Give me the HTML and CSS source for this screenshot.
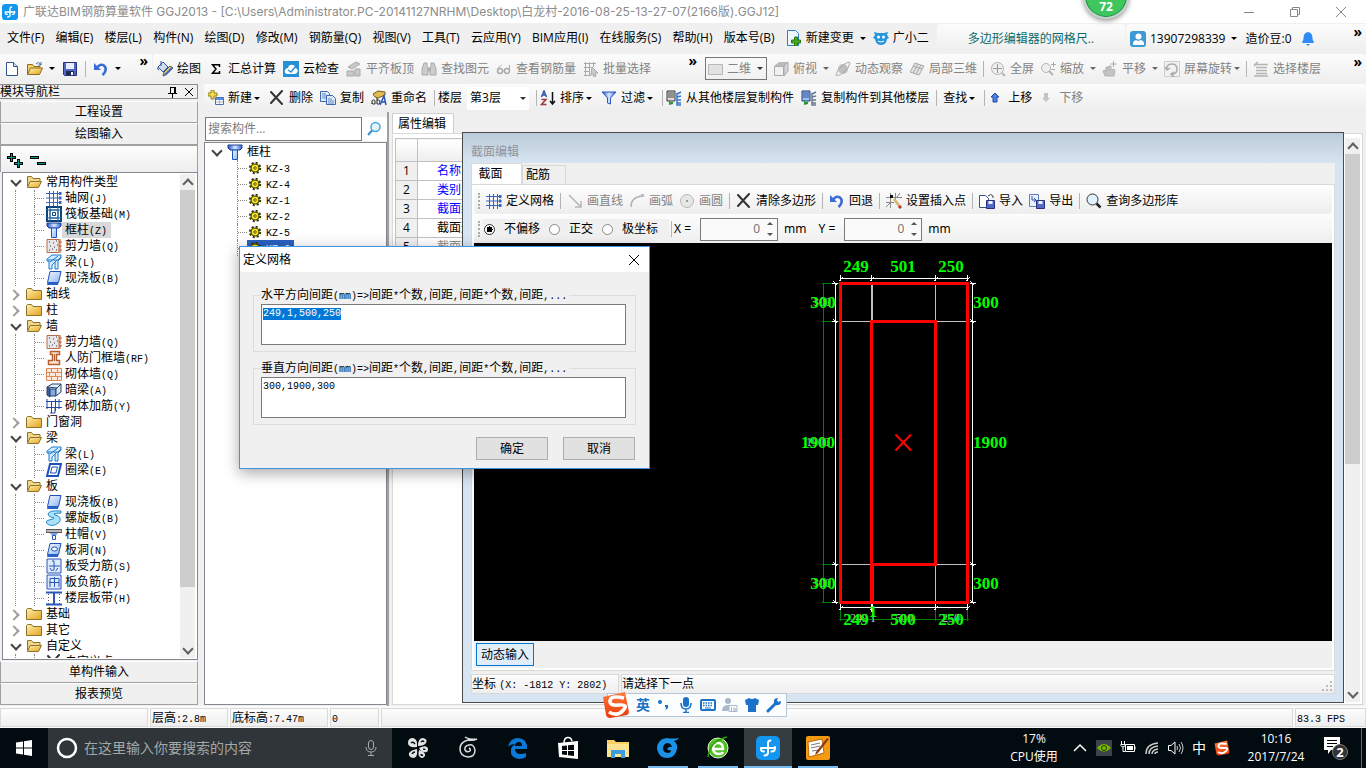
FILE: index.html
```html
<!DOCTYPE html>
<html lang="zh-CN">

<head>
    <meta charset="UTF-8">
    <title>广联达BIM钢筋算量软件 GGJ2013</title>
    <link rel="stylesheet" href="styles.css">
</head>

<body>
    <!-- 图标 -->
    <svg class="sprite" width="0" height="0">
        <defs>
            <linearGradient id="gy" x1="0" y1="0" x2="1" y2="1"><stop offset="0" stop-color="#fff3b0"/><stop offset="1" stop-color="#e2a21c"/></linearGradient>
            <linearGradient id="gb" x1="0" y1="0" x2="1" y2="1"><stop offset="0" stop-color="#f2f8ff"/><stop offset="1" stop-color="#8fb6ee"/></linearGradient>
            <linearGradient id="gc" x1="0" y1="0" x2="1" y2="0"><stop offset="0" stop-color="#1c50c8"/><stop offset=".5" stop-color="#dbe9ff"/><stop offset="1" stop-color="#2a62d8"/></linearGradient>
            <linearGradient id="gs" x1="0" y1="0" x2="0" y2="1"><stop offset="0" stop-color="#ff7a3c"/><stop offset="1" stop-color="#e83a08"/></linearGradient>
        </defs>
        <symbol id="app" viewBox="0 0 24 24"><rect width="24" height="24" rx="5" fill="#1296f0"/><path d="M12 16.500V7q0-2.500 2.500-2.500M5 12h14M5 12v1q0 2.500 3 2.500M19 12V11M12 16.500q0 3-3.500 3M19 12q0 3.500-3.500 3.500" fill="none" stroke="#fff" stroke-width="2" stroke-linecap="round"/></symbol>
        <symbol id="new" viewBox="0 0 16 16"><path d="M2.500 1.500h7l4 4v9h-11z" fill="#fff" stroke="#33518a"/><path d="M9.500 1.500v4h4" fill="#cfe0f6" stroke="#33518a"/></symbol>
        <symbol id="open" viewBox="0 0 16 16"><path d="M.5 13.500v-10h5l1.500 2h6v2" fill="#f3cf67" stroke="#8d6c21"/><path d="M.5 13.500l3-6.500h12l-3 6.500z" fill="url(#gy)" stroke="#8d6c21"/><path d="M9 3q3-3 5 1m0-3v3h-3" fill="none" stroke="#4d6f94"/></symbol>
        <symbol id="save" viewBox="0 0 16 16"><path d="M1.500 1.500h13v13h-12l-1-1z" fill="#5367c7" stroke="#28327b"/><path d="M4 2h8v6H4z" fill="#e9eefc"/><path d="M4 10h8v4H4z" fill="#20284f"/><path d="M9 11h2v3H9z" fill="#fff"/></symbol>
        <symbol id="undo" viewBox="0 0 16 16"><path d="M4 7q3-5 7-2.500 4 4-1.500 9.500" fill="none" stroke="#3a6bd8" stroke-width="2.500"/><path d="M1 2v7h7z" fill="#3a6bd8"/></symbol>
        <symbol id="paint" viewBox="0 0 16 16"><path d="M1 6l5-5 5 5-5 5z" fill="#cfdcf0" stroke="#38598f"/><path d="M4 0v5M1 6q-1 3 1 3" fill="none" stroke="#38598f"/><path d="M16 7l-6 6-4 2 1-4 6-6z" fill="#f0c860" stroke="#46526e"/><path d="M8 14l7-7" stroke="#3970c7" stroke-width="2"/></symbol>
        <symbol id="sigma" viewBox="0 0 16 16"><path d="M11.500 6V3.800H4.500L8 8l-3.500 4.200h7V10" fill="none" stroke="#000" stroke-width="1.500"/></symbol>
        <symbol id="cloud" viewBox="0 0 16 16"><rect width="16" height="16" fill="#2590d8"/><path d="M4 13q-3-1-2-4 1-2 3-2 1-4 5-3 2 0 2.500 3 3 1 2 4-1 2-3 2z" fill="#fff"/><path d="M5 9l3 2 5-6" fill="none" stroke="#2590d8" stroke-width="1.500"/></symbol>
        <symbol id="align" viewBox="0 0 16 16"><path d="M2 6l8-5 4 2-8 5zM1 10h7v5H1zM9 8h5v7H9z" fill="#c8c8c8" stroke="#aaa"/></symbol>
        <symbol id="binoc" viewBox="0 0 16 16"><path d="M3 2h3v3l1 2v7H1V8zM10 2h3l2 6v6H9V7l1-2zM7 7h2v3H7z" fill="#ccc" stroke="#aaa"/></symbol>
        <symbol id="glasses" viewBox="0 0 16 16"><circle cx="4" cy="10" r="2.500" fill="none" stroke="#aaa" stroke-width="1.500"/><circle cx="11" cy="10" r="2.500" fill="none" stroke="#aaa" stroke-width="1.500"/><path d="M1.500 10q0-4 4-6M13.500 10V4M6 10h3" fill="none" stroke="#aaa"/></symbol>
        <symbol id="batch" viewBox="0 0 16 16"><path d="M1 2.500h12M1 6.500h7M1 10.500h6M1 14.500h7M2.500 1v14M6.500 1v14M10.500 1v5" stroke="#aaa" fill="none"/><path d="M9 6l6 6-3 0 1 3-2 1-1-3-2 1z" fill="#ccc" stroke="#aaa"/></symbol>
        <symbol id="rect2d" viewBox="0 0 16 16"><path d="M.5 3.500h14v10H.5z" fill="#e2e2e2" stroke="#b8b8b8"/></symbol>
        <symbol id="cube" viewBox="0 0 16 16"><path d="M1 5l5-4h9l-4 4z" fill="#bbb"/><path d="M1.500 5.500h9v9h-9z" fill="#f0f0f0" stroke="#aaa"/><path d="M11 5l4-4v9l-4 5z" fill="#d5d5d5" stroke="#aaa"/></symbol>
        <symbol id="orbit" viewBox="0 0 16 16"><circle cx="8" cy="8" r="5" fill="#bfbfbf"/><path d="M1 14q1-6 7-10t7-2q-1 6-7 10t-7 2z" fill="none" stroke="#aaa"/></symbol>
        <symbol id="cube3" viewBox="0 0 16 16"><path d="M6 2l9 3-5 9-9-3zM4 5l9 3M9 3L4 12M12 4L7 13" fill="#e0e0e0" stroke="#aaa"/></symbol>
        <symbol id="full" viewBox="0 0 16 16"><circle cx="7.500" cy="7.500" r="6" fill="#eee" stroke="#b4b4b4"/><path d="M7.500 3v9M3 7.500h9" stroke="#999"/><path d="M12 12l3 3" stroke="#b4b4b4" stroke-width="2"/></symbol>
        <symbol id="zoomg" viewBox="0 0 16 16"><circle cx="6" cy="7" r="4.500" fill="#eee" stroke="#b4b4b4"/><path d="M9 10l4 4" stroke="#b4b4b4" stroke-width="2"/><path d="M11 3.500h5M13.500 1v5M11 8.500h4" stroke="#aaa"/></symbol>
        <symbol id="pan" viewBox="0 0 16 16"><path d="M3 15l-2-5 2-1 1 2V6h2v3l1-4h2v4l2-1 2 1-1 6z" fill="#c3c3c3" stroke="#b4b4b4"/><path d="M11.500 0v6M8.500 3h6" stroke="#aaa"/></symbol>
        <symbol id="rotate" viewBox="0 0 16 16"><path d="M.5.500h15v15H.500z" fill="#f2f2f2" stroke="#ccc"/><path d="M3 9q-1-6 5-6 5 0 5 5t-5 5M1 6l2 3 3-2M10 11l-3 2 3 3" fill="none" stroke="#aaa" stroke-width="1.500"/></symbol>
        <symbol id="floor" viewBox="0 0 16 16"><path d="M1 3.500h14M3 6.500h11M3 9.500h11M3 12.500h11M1 15h14M4.500 1L1 5" stroke="#b4b4b4" stroke-width="1.500"/></symbol>
        <symbol id="add" viewBox="0 0 16 16"><path d="M3 0h3v3h3v3H6v3H3V6H0V3h3z" fill="#f4dc4a" stroke="#93801e"/><path d="M7.500 7.500h8v7h-8z" fill="#fff" stroke="#4870b0"/><path d="M8 8h7v2H8z" fill="#5b8de0"/><path d="M8 12h7M11.500 10v4" stroke="#9bb5dd"/></symbol>
        <symbol id="x" viewBox="0 0 16 16"><path d="M2 2l11 12M13 1L2 13" stroke="#333" stroke-width="2" stroke-linecap="round"/></symbol>
        <symbol id="copy" viewBox="0 0 16 16"><path d="M.5 1.500h7l2 2v8h-9z" fill="#dfeafc" stroke="#3d66b0"/><path d="M6.500 5.500h6l3 3v6h-9z" fill="#dfeafc" stroke="#3d66b0"/><path d="M2 4h4M2 6h4M2 8h4M8 9h4M8 11h6M8 13h6" stroke="#5f88cc"/></symbol>
        <symbol id="rename" viewBox="0 0 16 16"><path d="M2 4l5-3 7 1v3l-7 3-3-1z" fill="#e3bd50" stroke="#6e5a28"/><path d="M1 14v-3q0-1 1.500-1T4 11v3H2.500Q1 14 1 13M6 8v6h1.500Q9 14 9 12t-1.500-2H6" fill="none" stroke="#222"/><path d="M9 15l4-9 2 9M10 12h4" stroke="#2a57b8" stroke-width="1.500" fill="none"/></symbol>
        <symbol id="sort" viewBox="0 0 16 16"><path d="M1.500 7L4 1l2.500 6M2.500 5h3" fill="none" stroke="#2f56a8" stroke-width="1.500"/><path d="M1.500 9.500H6l-4.500 5h5" fill="none" stroke="#a03a3a" stroke-width="1.500"/><path d="M12.500 2v11M10 11l2.500 3 2.500-3" fill="none" stroke="#111" stroke-width="1.500"/></symbol>
        <symbol id="filter" viewBox="0 0 16 16"><path d="M1 2h14L9.500 8v6l-3-1V8z" fill="url(#gc)" stroke="#2a57b8"/></symbol>
        <symbol id="copyfrom" viewBox="0 0 16 16"><path d="M1 1h8v10H1z" fill="#ddd" stroke="#333"/><path d="M2 3h6M2 5h6M2 7h6" stroke="#444"/><path d="M11 4l4-2M11 7l4-1M11 10h4M11 13h4M11 3v12h4" fill="none" stroke="#3978c8" stroke-width="1.500"/><path d="M4 9v3h3v2L3 15v-3z" fill="#249a3a"/></symbol>
        <symbol id="copyto" viewBox="0 0 16 16"><path d="M1 1h8v10H1z" fill="#9ec0ee" stroke="#1d3b74"/><path d="M2 3h6M2 5h6M2 7h6" stroke="#244f9a"/><path d="M11 4l4-2M11 7l4-1M11 10h4M11 13h4M11 3v12h4" fill="none" stroke="#68798e" stroke-width="1.500"/><path d="M4 9v3h3v2L3 15v-3z" fill="#249a3a"/></symbol>
        <symbol id="up" viewBox="0 0 16 16"><path d="M7 3l4 4H9v5H5V7H3z" fill="#4a83e6" stroke="#1d4ba2"/></symbol>
        <symbol id="down" viewBox="0 0 16 16"><path d="M7 12L3 8h2V3h4v5h2z" fill="#c4c4c4"/></symbol>
        <symbol id="folder" viewBox="0 0 16 16"><path d="M.5 13.500v-10l1-1h4l1.500 2h8.500v9z" fill="url(#gy)" stroke="#8f7130"/></symbol>
        <symbol id="fopen" viewBox="0 0 16 16"><path d="M1.500 12.500v-10h4l1.500 2h7v3" fill="#f2d98a" stroke="#8f7130"/><path d="M1.500 13.500l2.500-6h11.500l-3 6z" fill="url(#gy)" stroke="#8f7130"/></symbol>
        <symbol id="grid" viewBox="0 0 16 16"><path d="M0 3.500h15M0 8h15M0 12.500h15M3.500 1v15M7.500 1v15M11.500 1v15" stroke="#3566c0"/><path d="M13 2h2.500v3H13zM13 6.500h2.500v3H13zM13 11h2.500v3H13z" fill="#3566c0"/></symbol>
        <symbol id="raft" viewBox="0 0 16 16"><path d="M1 1h14v14H1z" fill="#fff" stroke="#08447c" stroke-width="2"/><path d="M4 4h8v8H4zM4 0v16M12 0v16M0 4h16M0 12h16" fill="none" stroke="#1b5fa0"/><path d="M6.500 6.500h3v3h-3z" fill="#fff" stroke="#08447c"/></symbol>
        <symbol id="column" viewBox="0 0 16 16"><path d="M1 1h14v3l-2 2H3L1 4z" fill="url(#gc)" stroke="#1c3f8c"/><path d="M5.500 6h5v9.500h-5z" fill="url(#gb)" stroke="#1c50c8"/></symbol>
        <symbol id="wall" viewBox="0 0 16 16"><path d="M1 1.500h12v13H1z" fill="#e8e8e8" stroke="#b86a4a"/><path d="M3 4h1M7 5h1M10 3h1M4 8h1M8 9h1M11 7h1M3 12h1M6 11h1M10 12h1" stroke="#333"/><path d="M14 1v14M13 4h3M13 8h3M13 12h3" stroke="#c05a28"/></symbol>
        <symbol id="beam" viewBox="0 0 16 16"><path d="M1 5l5-4h9v3l-3 3v8H9V8L6 11v4H3V7H1z" fill="#d5ebff" stroke="#1c78c8"/><path d="M2 6h10l3-3M4 8l8-6M6 11l5-5" fill="none" stroke="#1c78c8"/></symbol>
        <symbol id="slab" viewBox="0 0 16 16"><path d="M4 1.500h11l-2.500 11H1.500z" fill="url(#gb)" stroke="#1c50b8"/><path d="M1.500 12.500h11l-.5 2.500H1z" fill="#2a62c8"/></symbol>
        <symbol id="door" viewBox="0 0 16 16"><path d="M4.500 1.500h9v3h-3v6h3v4h-11v-4h4v-6h-2z" fill="#fbe3d3" stroke="#b5602e" stroke-width="1.500"/><path d="M8.500 4v7" stroke="#b5602e"/></symbol>
        <symbol id="brick" viewBox="0 0 16 16"><path d="M.5 2.500h15v12H.5zM0 6.500h16M0 10.500h16M5.500 2v4M11.500 2v4M3.500 6v4M9.500 6v4M5.500 10v4M11.500 10v4" fill="#fde9da" stroke="#d88a5c"/></symbol>
        <symbol id="hbeam" viewBox="0 0 16 16"><path d="M1 5l5-3 9 0-4 4z" fill="#e8f0fa" stroke="#22406f"/><path d="M1 5l3 2v8l-3-2z" fill="#3a5f9c" stroke="#22406f"/><path d="M4 7h6v7H4z" fill="#86a8dc" stroke="#22406f"/><path d="M10 7l5-5v8l-5 4z" fill="#dce6f5" stroke="#22406f"/></symbol>
        <symbol id="rebar" viewBox="0 0 16 16"><path d="M0 3.500h16M0 9.500h16M5.500 3v12M9.500 1v12M1 1v10M13 1v10M4 15h5v-5" fill="none" stroke="#2448a8"/></symbol>
        <symbol id="ring" viewBox="0 0 16 16"><path d="M4 2h11l-3 12H1z" fill="#fff" stroke="#1c50b8" stroke-width="2"/><path d="M6 5h5.500l-1.500 6H4.500z" fill="#fff" stroke="#1c50b8"/></symbol>
        <symbol id="spiral" viewBox="0 0 16 16"><path d="M15 1Q3 0 2 4q0 3 6 4 0 1-3 1.500-5 .5-5 3 5 6 13 0 3-4-1-6.500-4-1-4-2 2-1 7-1z" fill="#aee0fa" stroke="#1c88c8"/></symbol>
        <symbol id="cap" viewBox="0 0 16 16"><path d="M0 3.500h16v3H0z" fill="#bbb" stroke="#555"/><path d="M4 7h8l-2.500 3h-3z" fill="#78a0e6"/><path d="M6.500 9.500h3v4h-3z" fill="#fff" stroke="#2a57b8"/></symbol>
        <symbol id="hole" viewBox="0 0 16 16"><path d="M4 1.500h11l-2.500 11H1.500z" fill="url(#gb)" stroke="#1c50b8"/><path d="M1.500 12.500h11l-.5 2.500H1z" fill="#2a62c8"/><ellipse cx="8.500" cy="7" rx="3" ry="2" fill="#fff" stroke="#1c50b8"/></symbol>
        <symbol id="force" viewBox="0 0 16 16"><path d="M1 1h14v14H1z" fill="#dceaff" stroke="#2a57b8"/><path d="M3 8h11M8 3v9q-3 2-4-2M11.500 10q0 2-2 3M6 3h2" fill="none" stroke="#2a57b8"/></symbol>
        <symbol id="neg" viewBox="0 0 16 16"><path d="M1 1h14v14H1z" fill="#dceaff" stroke="#2a57b8"/><path d="M3 8.500h10M8.500 3v10M4 13V4.500h9V13" fill="none" stroke="#2a57b8"/></symbol>
        <symbol id="strip" viewBox="0 0 16 16"><path d="M0 2.500h16M0 14.500h16" stroke="#2a57b8" stroke-width="2"/><path d="M8 3v11" stroke="#2a57b8" stroke-width="2"/><path d="M2.500 4v10M13.500 4v10" stroke="#555" stroke-dasharray="1 2"/></symbol>
        <symbol id="gear" viewBox="-2 -2 20 20"><circle cx="8" cy="8" r="6.500" fill="none" stroke="#3d3800" stroke-width="2.500" stroke-dasharray="2.600 2.500"/><circle cx="8" cy="8" r="5" fill="#f6e60a" stroke="#3d3800" stroke-width="1.500"/><circle cx="8" cy="8" r="1.500" fill="#fff" stroke="#222"/></symbol>
        <symbol id="find" viewBox="0 0 16 16"><circle cx="9.500" cy="6" r="4.500" fill="#e4f4fd" stroke="#4ba6dc" stroke-width="1.500"/><path d="M6 9.500L2 14" stroke="#3a8fd0" stroke-width="2"/></symbol>
        <symbol id="mag" viewBox="0 0 16 16"><circle cx="6.500" cy="6.500" r="5.500" fill="#dff2fd" stroke="#333"/><path d="M10.500 10.500l4 4" stroke="#222" stroke-width="2.500"/></symbol>
        <symbol id="line" viewBox="0 0 16 16"><path d="M2 2l11 11M14 8v6H8" fill="none" stroke="#b8b8b8" stroke-width="1.500"/></symbol>
        <symbol id="arc" viewBox="0 0 16 16"><path d="M2 14Q2 4 13 3" fill="none" stroke="#b0b0b0" stroke-width="1.500"/><path d="M12 1h3v3h-3z" fill="#bbb"/></symbol>
        <symbol id="circ" viewBox="0 0 16 16"><circle cx="8" cy="8" r="6.500" fill="#e6e6e6" stroke="#b8b8b8"/><path d="M7 7h2v2H7z" fill="#999"/></symbol>
        <symbol id="pick" viewBox="0 0 16 16"><path d="M0 4.500h16M0 9.500h8M4.500 0v15M9.500 0v7M14 0l-3 4M0 14l4-4" stroke="#888"/><path d="M4 2h3v3H4z" fill="#111"/><path d="M8 6l6 8" stroke="#d8b468" stroke-width="2.500"/><path d="M13 13l2 2" stroke="#b03a3a" stroke-width="3"/></symbol>
        <symbol id="imp" viewBox="0 0 16 16"><path d="M.5 2.500h6l3 3v9h-9z" fill="#fff" stroke="#33518a"/><path d="M9 3q3-3 5 0v2" fill="none" stroke="#444"/><path d="M7.500 7.500h8v8h-8z" fill="#5367c7" stroke="#28327b"/><path d="M9.500 8h4v3h-4z" fill="#eef"/></symbol>
        <symbol id="exp" viewBox="0 0 16 16"><path d="M.5 1.500h9v12h-9z" fill="#eaf1fc" stroke="#6080b8"/><path d="M3 3v4h4M5 5l2 2-2 2" fill="none" stroke="#2a57b8"/><path d="M7.500 7.500h8v8h-8z" fill="#5367c7" stroke="#28327b"/><path d="M9.500 8h4v3h-4z" fill="#eef"/></symbol>
        <symbol id="change" viewBox="0 0 16 16"><path d="M1.500.500h8l3 3v12h-11z" fill="#eff6ff" stroke="#2a80c8"/><path d="M8.500 7h3v3h3v3h-3v3h-3v-3h-3v-3h3z" fill="#46a820" stroke="#2f7d12"/></symbol>
        <symbol id="mascot" viewBox="0 0 16 16"><path d="M1 2l4 1h6l4-1-1 3 2 3-2 1q-1 6-6 6T2 9L0 8l2-3z" fill="#2596dc"/><ellipse cx="5.500" cy="7" rx="1.500" ry="1.500" fill="#fff"/><ellipse cx="10.500" cy="7" rx="1.500" ry="1.500" fill="#fff"/><path d="M5 11q3 2 6 0" stroke="#fff" fill="none"/></symbol>
        <symbol id="user" viewBox="0 0 16 16"><rect width="16" height="16" rx="3" fill="#3c9ad6"/><circle cx="8.500" cy="5.500" r="3" fill="#fff"/><path d="M3 14v-2q0-2 3-3l2 1 3-1q3 1 3 3v2z" fill="#fff"/></symbol>
        <symbol id="bell" viewBox="0 0 16 16"><path d="M8 1q5 1 4.500 7l1.500 4H2l1.500-4Q3 2 8 1z" fill="#2c8cf4"/><path d="M6 13h4l-2 2z" fill="#2c8cf4"/></symbol>
        <symbol id="sogou" viewBox="0 0 28 28"><path d="M1 6L23 1l4 20q0 2-2 3L8 27q-3 0-4-3z" fill="url(#gs)"/><path d="M22 7Q9 4 8 9.500t9 4.500 4 5.500-14 1.500" fill="none" stroke="#fff" stroke-width="3.500"/></symbol>
        <symbol id="swirl" viewBox="0 0 24 24"><path d="M21 3q-4 2-9 1-8 2-8 9t8 8q7 0 7-7-1-6-6-5-5 1-4 5 2 3 5 1 1-2-1-3M9 1q4 3 10 2" fill="none" stroke="currentColor" stroke-width="1.500"/></symbol>
    </svg>

    <!-- 标题栏 -->
    <header class="titlebar">
        <svg class="ic"><use href="#app"/></svg>
        <span class="caption">广联达BIM钢筋算量软件 GGJ2013 - [C:\Users\Administrator.PC-20141127NRHM\Desktop\白龙村-2016-08-25-13-27-07(2166版).GGJ12]</span>
        <div class="winbtns">
            <button><svg class="ic" viewBox="0 0 16 16"><path d="M3 8.500h10" stroke="#888"/></svg></button>
            <button><svg class="ic" viewBox="0 0 16 16"><path d="M3.500 5.500h7v7h-7zM5.500 5V3.500h7v7H11" fill="none" stroke="#888"/></svg></button>
            <button><svg class="ic" viewBox="0 0 16 16"><path d="M3 3l10 10M13 3L3 13" stroke="#888"/></svg></button>
        </div>
    </header>
    <div class="badge">72</div>

    <!-- 菜单 -->
    <nav class="menubar">
        <div class="menus">
            <button>文件(F)</button><button>编辑(E)</button><button>楼层(L)</button><button>构件(N)</button><button>绘图(D)</button><button>修改(M)</button><button>钢筋量(Q)</button><button>视图(V)</button><button>工具(T)</button><button>云应用(Y)</button><button>BIM应用(I)</button><button>在线服务(S)</button><button>帮助(H)</button><button>版本号(B)</button>
            <span class="extra">
                <button class="tb"><svg class="ic"><use href="#change"/></svg>新建变更<i class="arrow wide"></i></button>
                <button class="tb"><svg class="ic"><use href="#mascot"/></svg>广小二</button>
            </span>
        </div>
        <div class="strip tip"><a href="#">多边形编辑器的网格尺..</a></div>
        <div class="strip account">
            <button class="tb"><svg class="ic"><use href="#user"/></svg>13907298339<i class="arrow wide"></i></button>
            <button>造价豆:0</button>
            <button class="tb"><svg class="ic"><use href="#bell"/></svg></button>
            <span class="more">»</span>
        </div>
    </nav>

    <!-- 工具栏 -->
    <div class="toolbar">
        <div class="strip files">
            <button class="tb"><svg class="ic"><use href="#new"/></svg></button>
            <button class="tb"><svg class="ic"><use href="#open"/></svg><i class="arrow wide"></i></button>
            <button class="tb"><svg class="ic"><use href="#save"/></svg></button>
            <i class="sep"></i>
            <button class="tb"><svg class="ic"><use href="#undo"/></svg><i class="arrow wide"></i></button>
            <span class="more">»</span>
        </div>
        <div class="strip draws">
            <button class="tb"><svg class="ic"><use href="#paint"/></svg>绘图</button>
            <button class="tb"><svg class="ic"><use href="#sigma"/></svg>汇总计算</button>
            <button class="tb"><svg class="ic"><use href="#cloud"/></svg>云检查</button>
            <button class="tb off"><svg class="ic"><use href="#align"/></svg>平齐板顶</button>
            <button class="tb off"><svg class="ic"><use href="#binoc"/></svg>查找图元</button>
            <button class="tb off"><svg class="ic"><use href="#glasses"/></svg>查看钢筋量</button>
            <button class="tb off"><svg class="ic"><use href="#batch"/></svg>批量选择</button>
            <span class="more">»</span>
        </div>
        <div class="strip views">
            <label class="combo boxed off"><svg class="ic"><use href="#rect2d"/></svg><select><option>二维</option></select></label>
            <button class="tb off"><svg class="ic"><use href="#cube"/></svg>俯视<i class="arrow wide"></i></button>
            <button class="tb off"><svg class="ic"><use href="#orbit"/></svg>动态观察</button>
            <button class="tb off"><svg class="ic"><use href="#cube3"/></svg>局部三维</button>
            <i class="sep"></i>
            <button class="tb off"><svg class="ic"><use href="#full"/></svg>全屏</button>
            <button class="tb off"><svg class="ic"><use href="#zoomg"/></svg>缩放<i class="arrow wide"></i></button>
            <button class="tb off"><svg class="ic"><use href="#pan"/></svg>平移<i class="arrow wide"></i></button>
            <button class="tb off"><svg class="ic"><use href="#rotate"/></svg>屏幕旋转<i class="arrow"></i></button>
            <i class="sep"></i>
            <button class="tb off"><svg class="ic"><use href="#floor"/></svg>选择楼层</button>
            <span class="more">»</span>
        </div>
    </div>

    <main class="main">
        <!-- 模块导航栏 -->
        <aside class="sidebar">
            <div class="side-title">模块导航栏
                <svg class="ic" viewBox="0 0 16 16"><path d="M5.500 3v6M10 3v6M5 3.500h5M3 9.500h9M7.500 10v4" stroke="#000" fill="none"/><path d="M9 3h2v6H9z"/></svg>
                <svg class="ic" viewBox="0 0 16 16"><path d="M4 4l8 8M12 4l-8 8" stroke="#000"/></svg>
            </div>
            <button class="side-btn">工程设置</button>
            <button class="side-btn">绘图输入</button>
            <div class="side-tools">
                <svg width="40" height="18" viewBox="0 0 40 18"><path d="M4.500 0v9M0 4.500h9M11.500 6v9M7 10.500h9M23 4.500h9M30 10.500h9" stroke="#000" stroke-width="3"/><path d="M4.500 1v7M1 4.500h7M11.500 7v7M8 10.500h7M24 4.500h7M31 10.500h7" stroke="#08968c"/></svg>
            </div>
            <div class="tree-box">
                <ul class="tree">
                    <li>
                        <div class="row"><b class="open"></b><svg class="ic"><use href="#fopen"/></svg><span>常用构件类型</span></div>
                        <ul class="kids">
                            <li><svg class="ic"><use href="#grid"/></svg><span>轴网<kbd>(J)</kbd></span></li>
                            <li><svg class="ic"><use href="#raft"/></svg><span>筏板基础<kbd>(M)</kbd></span></li>
                            <li class="cur"><svg class="ic"><use href="#column"/></svg><span>框柱<kbd>(Z)</kbd></span></li>
                            <li><svg class="ic"><use href="#wall"/></svg><span>剪力墙<kbd>(Q)</kbd></span></li>
                            <li><svg class="ic"><use href="#beam"/></svg><span>梁<kbd>(L)</kbd></span></li>
                            <li><svg class="ic"><use href="#slab"/></svg><span>现浇板<kbd>(B)</kbd></span></li>
                        </ul>
                    </li>
                    <li><div class="row"><b></b><svg class="ic"><use href="#folder"/></svg><span>轴线</span></div></li>
                    <li><div class="row"><b></b><svg class="ic"><use href="#folder"/></svg><span>柱</span></div></li>
                    <li>
                        <div class="row"><b class="open"></b><svg class="ic"><use href="#fopen"/></svg><span>墙</span></div>
                        <ul class="kids">
                            <li><svg class="ic"><use href="#wall"/></svg><span>剪力墙<kbd>(Q)</kbd></span></li>
                            <li><svg class="ic"><use href="#door"/></svg><span>人防门框墙<kbd>(RF)</kbd></span></li>
                            <li><svg class="ic"><use href="#brick"/></svg><span>砌体墙<kbd>(Q)</kbd></span></li>
                            <li><svg class="ic"><use href="#hbeam"/></svg><span>暗梁<kbd>(A)</kbd></span></li>
                            <li><svg class="ic"><use href="#rebar"/></svg><span>砌体加筋<kbd>(Y)</kbd></span></li>
                        </ul>
                    </li>
                    <li><div class="row"><b></b><svg class="ic"><use href="#folder"/></svg><span>门窗洞</span></div></li>
                    <li>
                        <div class="row"><b class="open"></b><svg class="ic"><use href="#fopen"/></svg><span>梁</span></div>
                        <ul class="kids">
                            <li><svg class="ic"><use href="#beam"/></svg><span>梁<kbd>(L)</kbd></span></li>
                            <li><svg class="ic"><use href="#ring"/></svg><span>圈梁<kbd>(E)</kbd></span></li>
                        </ul>
                    </li>
                    <li>
                        <div class="row"><b class="open"></b><svg class="ic"><use href="#fopen"/></svg><span>板</span></div>
                        <ul class="kids">
                            <li><svg class="ic"><use href="#slab"/></svg><span>现浇板<kbd>(B)</kbd></span></li>
                            <li><svg class="ic"><use href="#spiral"/></svg><span>螺旋板<kbd>(B)</kbd></span></li>
                            <li><svg class="ic"><use href="#cap"/></svg><span>柱帽<kbd>(V)</kbd></span></li>
                            <li><svg class="ic"><use href="#hole"/></svg><span>板洞<kbd>(N)</kbd></span></li>
                            <li><svg class="ic"><use href="#force"/></svg><span>板受力筋<kbd>(S)</kbd></span></li>
                            <li><svg class="ic"><use href="#neg"/></svg><span>板负筋<kbd>(F)</kbd></span></li>
                            <li><svg class="ic"><use href="#strip"/></svg><span>楼层板带<kbd>(H)</kbd></span></li>
                        </ul>
                    </li>
                    <li><div class="row"><b></b><svg class="ic"><use href="#folder"/></svg><span>基础</span></div></li>
                    <li><div class="row"><b></b><svg class="ic"><use href="#folder"/></svg><span>其它</span></div></li>
                    <li>
                        <div class="row"><b class="open"></b><svg class="ic"><use href="#fopen"/></svg><span>自定义</span></div>
                        <ul class="kids">
                            <li><svg class="ic"><use href="#x"/></svg><span>自定义点</span></li>
                        </ul>
                    </li>
                </ul>
                <div class="vscroll"><b class="up"></b><i class="thumb long"></i><b class="dn"></b></div>
            </div>
            <button class="side-btn">单构件输入</button>
            <button class="side-btn">报表预览</button>
        </aside>

        <div class="work">
            <div class="strip comp-tools">
                <button class="tb"><svg class="ic"><use href="#add"/></svg>新建<i class="arrow"></i></button>
                <button class="tb"><svg class="ic"><use href="#x"/></svg>删除</button>
                <button class="tb"><svg class="ic"><use href="#copy"/></svg>复制</button>
                <button class="tb"><svg class="ic"><use href="#rename"/></svg>重命名</button>
                <i class="sep"></i>
                <label for="floorSel">楼层</label>
                <span class="combo white"><select id="floorSel"><option>第3层</option></select></span>
                <i class="sep"></i>
                <button class="tb"><svg class="ic"><use href="#sort"/></svg>排序<i class="arrow"></i></button>
                <button class="tb"><svg class="ic"><use href="#filter"/></svg>过滤<i class="arrow"></i></button>
                <i class="sep"></i>
                <button class="tb"><svg class="ic"><use href="#copyfrom"/></svg>从其他楼层复制构件</button>
                <button class="tb"><svg class="ic"><use href="#copyto"/></svg>复制构件到其他楼层</button>
                <i class="sep"></i>
                <button class="tb find">查找<i class="arrow"></i></button>
                <i class="sep"></i>
                <button class="tb"><svg class="ic"><use href="#up"/></svg>上移</button>
                <button class="tb off"><svg class="ic"><use href="#down"/></svg>下移</button>
            </div>
            <div class="panels">
                <!-- 构件列表 -->
                <section class="comps">
                    <div class="search">
                        <input type="text" placeholder="搜索构件..." aria-label="搜索构件">
                        <button><svg class="ic"><use href="#find"/></svg></button>
                    </div>
                    <div class="comp-list">
                        <div class="row"><b class="open"></b><svg class="ic"><use href="#column"/></svg><span>框柱</span></div>
                        <ul class="kids">
                            <li><svg class="ic"><use href="#gear"/></svg><span><kbd>KZ-3</kbd></span></li>
                            <li><svg class="ic"><use href="#gear"/></svg><span><kbd>KZ-4</kbd></span></li>
                            <li><svg class="ic"><use href="#gear"/></svg><span><kbd>KZ-1</kbd></span></li>
                            <li><svg class="ic"><use href="#gear"/></svg><span><kbd>KZ-2</kbd></span></li>
                            <li><svg class="ic"><use href="#gear"/></svg><span><kbd>KZ-5</kbd></span></li>
                            <li class="sel"><svg class="ic"><use href="#gear"/></svg><span><kbd>KZ-6</kbd></span></li>
                        </ul>
                    </div>
                </section>
                <!-- 属性编辑 -->
                <section class="props">
                    <div class="tabs"><button class="tab">属性编辑</button></div>
                    <div class="props-body">
                        <table>
                            <tr><th></th><th></th></tr>
                            <tr><td>1</td><td class="blue">名称</td></tr>
                            <tr><td>2</td><td class="blue">类别</td></tr>
                            <tr><td>3</td><td class="blue">截面编辑</td></tr>
                            <tr><td>4</td><td>截面形状</td></tr>
                            <tr><td>5</td><td class="gray">截面宽</td></tr>
                        </table>
                        <div class="vscroll"><b class="up"></b><i class="thumb"></i><b class="dn"></b></div>
                    </div>
                </section>
            </div>
        </div>
    </main>

    <!-- 截面编辑窗口 -->
    <section class="editor">
        <h2>截面编辑</h2>
        <div class="ed-tabs"><button class="on">截面</button><button>配筋</button></div>
        <div class="ed-page">
            <div class="strip ed-tools">
                <i class="grip"></i>
                <button class="tb"><svg class="ic"><use href="#grid"/></svg>定义网格</button>
                <i class="sep"></i>
                <button class="tb off"><svg class="ic"><use href="#line"/></svg>画直线</button>
                <button class="tb off"><svg class="ic"><use href="#arc"/></svg>画弧</button>
                <button class="tb off"><svg class="ic"><use href="#circ"/></svg>画圆</button>
                <i class="sep"></i>
                <button class="tb"><svg class="ic"><use href="#x"/></svg>清除多边形</button>
                <i class="sep"></i>
                <button class="tb"><svg class="ic"><use href="#undo"/></svg>回退</button>
                <i class="sep"></i>
                <button class="tb"><svg class="ic"><use href="#pick"/></svg>设置插入点</button>
                <i class="sep"></i>
                <button class="tb"><svg class="ic"><use href="#imp"/></svg>导入</button>
                <button class="tb"><svg class="ic"><use href="#exp"/></svg>导出</button>
                <i class="sep"></i>
                <button class="tb"><svg class="ic"><use href="#mag"/></svg>查询多边形库</button>
            </div>
            <div class="strip ed-opts">
                <i class="grip"></i>
                <div class="radios">
                    <label><input type="radio" name="offset" checked>不偏移</label>
                    <label><input type="radio" name="offset">正交</label>
                    <label><input type="radio" name="offset">极坐标</label>
                </div>
                <i class="sep"></i>
                <label class="axis" for="offX">X =</label>
                <span class="spin"><input type="text" id="offX" value="0"><span><i></i><i></i></span></span>
                <span class="unit">mm</span>
                <label class="axis" for="offY">Y =</label>
                <span class="spin"><input type="text" id="offY" value="0"><span><i></i><i></i></span></span>
                <span class="unit">mm</span>
            </div>
            <div class="canvas">
                <svg width="858" height="399" viewBox="474 243 858 399">
                    <!-- 轴网 -->
                    <path d="M935.500 283v38M935.500 565v38M840 321.500h128M840 564.500h128" stroke="#c0c0c0"/>
                    <path d="M872 283v38" stroke="#c0c0c0" stroke-width="2"/>
                    <g fill="none" stroke="#008000">
                        <path d="M823.500 283v320M822 283.500h18M822 321.500h18M822 564.500h18M822 602.500h18M839 619.500h130M840.500 604v17M872.500 604v17M935.500 604v17M967.500 604v17"/>
                    </g>
                    <g fill="none" stroke="#fff">
                        <path d="M840 278.500h128M840.500 275v6M871.500 275v6M935.500 275v6M967.500 275v6M839 281l4-4M870 281l4-4M934 281l4-4M966 281l4-4"/>
                        <path d="M840 607.500h128M840.500 604v6M871.500 604v8M872.500 604v8M935.500 604v6M967.500 604v6M839 610l4-4M870 610l4-4M934 610l4-4M966 610l4-4"/>
                        <path d="M835.500 283v320M832 283.500h6M832 321.500h6M832 564.500h6M832 602.500h6M833 281l4 4M833 319l4 4M833 562l4 4M833 600l4 4"/>
                        <path d="M972.500 283v320M970 283.500h6M970 321.500h6M970 564.500h6M970 602.500h6M970 281l4 4M970 319l4 4M970 562l4 4M970 600l4 4"/>
                    </g>
                    <g class="dim2">
                        <text x="822" y="306">300</text><text x="818" y="446">1900</text><text x="822" y="587">300</text>
                        <text x="859" y="622">249</text><text x="873" y="622">1</text><text x="904" y="622">500</text><text x="951" y="622">250</text>
                    </g>
                    <!-- 截面轮廓 -->
                    <g fill="none" stroke="#f00" stroke-width="3">
                        <path d="M840.500 283.500h127v319h-127zM871.500 321.500h64v243h-64z"/>
                        <path d="M872 564v38" stroke-width="4"/>
                        <path d="M895.500 434.500l15.500 16M911 434.500l-15.500 16" stroke-width="2"/>
                    </g>
                    <g class="dim">
                        <text x="856" y="272">249</text><text x="903" y="272">501</text><text x="951" y="272">250</text>
                        <text x="823" y="308">300</text><text x="818" y="448">1900</text><text x="823" y="589">300</text>
                        <text x="986" y="308">300</text><text x="990" y="448">1900</text><text x="986" y="589">300</text>
                        <text x="856" y="625">249</text><text x="873" y="617">1</text><text x="903" y="625">500</text><text x="951" y="625">250</text>
                    </g>
                </svg>
            </div>
            <div class="ed-foot"><button>动态输入</button></div>
        </div>
        <div class="ed-status">
            <span>坐标 <kbd>(X: -1812 Y: 2802)</kbd></span><span class="grow">请选择下一点<svg width="12" height="12" viewBox="0 0 12 12"><path d="M8 0h2v2H8zM4 4h2v2H4zM8 4h2v2H8zM0 8h2v2H0zM4 8h2v2H4zM8 8h2v2H8z" fill="#bbb"/></svg></span>
        </div>
    </section>

    <!-- 定义网格对话框 -->
    <form class="dialog" id="gridForm">
        <div class="dlg-title">定义网格<button type="button"><svg class="ic" viewBox="0 0 16 16"><path d="M3 3l10 10M13 3L3 13" stroke="#000"/></svg></button></div>
        <fieldset>
            <legend><label for="hGap">水平方向间距<kbd>(mm)=&gt;</kbd>间距<kbd>*</kbd>个数<kbd>,</kbd>间距<kbd>,</kbd>间距<kbd>*</kbd>个数<kbd>,</kbd>间距<kbd>,...</kbd></label></legend>
            <textarea id="hGap" spellcheck="false">249,1,500,250</textarea>
        </fieldset>
        <fieldset>
            <legend><label for="vGap">垂直方向间距<kbd>(mm)=&gt;</kbd>间距<kbd>*</kbd>个数<kbd>,</kbd>间距<kbd>,</kbd>间距<kbd>*</kbd>个数<kbd>,</kbd>间距<kbd>,...</kbd></label></legend>
            <textarea id="vGap" spellcheck="false">300,1900,300</textarea>
        </fieldset>
        <div class="dlg-btns"><button type="submit">确定</button><button type="button">取消</button></div>
    </form>

    <footer class="statusbar">
        <span class="c1"></span><span class="c2">层高<kbd>:2.8m</kbd></span><span class="c3">底标高<kbd>:7.47m</kbd></span><span class="c4"><kbd>0</kbd></span><span class="grow"></span><span class="c5"><kbd>83.3 FPS</kbd></span>
    </footer>

    <!-- 输入法 -->
    <div class="ime">
        <svg class="logo"><use href="#sogou"/></svg>
        <button>英</button>
        <button><svg class="ic" viewBox="0 0 16 16"><circle cx="4" cy="5" r="2" fill="#1c72c8"/><path d="M9 8h3q1 4-3 5 2-2 0-3z" fill="#1c72c8"/></svg></button>
        <button><svg class="ic" viewBox="0 0 16 16"><rect x="5" y="0" width="6" height="10" rx="3" fill="#1c72c8"/><path d="M3 6q0 6 5 6t5-6M8 12v3M5 15.500h6" fill="none" stroke="#1c72c8" stroke-width="1.500"/></svg></button>
        <button><svg class="ic" viewBox="0 0 16 16"><rect x="1" y="3" width="14" height="10" rx="1" fill="none" stroke="#1c72c8" stroke-width="2"/><path d="M3 6h10M3 8.500h10" stroke="#1c72c8" stroke-width="1.500" stroke-dasharray="1.500 1"/><path d="M5 11h6" stroke="#1c72c8"/></svg></button>
        <button><svg class="ic" viewBox="0 0 16 16"><circle cx="6" cy="4" r="3" fill="#aab8cc"/><path d="M0 14q0-6 6-6t6 6z" fill="#aab8cc"/><path d="M7 8.500h8v6H7z" fill="#fff" stroke="#aab8cc"/><path d="M9.500 10v4M12 10v4h2v-2h-2" fill="none" stroke="#aab8cc"/></svg></button>
        <button><svg class="ic" viewBox="0 0 16 16"><path d="M5 1q3 2 6 0l4 2-1 5h-2v7H4V8H2L1 3z" fill="#1c72c8"/></svg></button>
        <button><svg class="ic" viewBox="0 0 16 16"><path d="M2 14l7-7" stroke="#1c72c8" stroke-width="3" stroke-linecap="round"/><path d="M12 1q-5 0-4 5 1 3 4 2 3 0 3-4l-3 1-1-2z" fill="#1c72c8"/></svg></button>
    </div>

    <!-- 任务栏 -->
    <div class="taskbar">
        <button class="start"><svg class="ic" viewBox="0 0 16 16"><path d="M0 2.500L7 1.500v6H0zM8 1.300L16 0v7.500H8zM0 8.500h7v6l-7-1zM8 8.500h8V16l-8-1.300z" fill="#fff"/></svg></button>
        <div class="cortana">
            <svg width="22" height="22" viewBox="0 0 22 22"><circle cx="11" cy="11" r="9" fill="none" stroke="#fff" stroke-width="2.500"/></svg>
            <input type="text" placeholder="在这里输入你要搜索的内容" aria-label="搜索">
            <svg class="ic" viewBox="0 0 16 16"><rect x="5.500" y="0.500" width="5" height="9" rx="2.500" fill="none" stroke="#aaa"/><path d="M3 7q0 5 5 5t5-5M8 12v3M5 15.500h6" fill="none" stroke="#aaa"/></svg>
        </div>
        <div class="apps">
            <button><svg viewBox="0 0 24 24"><g fill="#e4e4e4"><path d="M11 11Q2 12 2 7q0-5 5-5 5 1 4 9z"/><path d="M12 10q0-8 5-8 5 1 3 5-2 3-8 3z"/><path d="M13 12q8-4 9 1 0 4-4 3-3 0-5-4z"/><path d="M13 14q7 2 6 6-3 4-6 0-1-2 0-6z"/><path d="M11 13q1 9-4 9-5-1-4-5 2-3 8-4z"/></g><path d="M5 7q2-2 4 1M15 6q2-2 3 0M6 18q1-2 3-2M15 18q0 2 2 1M17 13q2 0 2 1" fill="none" stroke="#06121a" stroke-width="1.500"/></svg></button>
            <button class="pale"><svg viewBox="0 0 24 24"><use href="#swirl"/></svg></button>
            <button><svg viewBox="0 0 24 24"><path d="M2 11Q4 2 12 2q10 1 9 11H9q0 5 6 5 3 0 5-1v4q-3 2-7 2-9-1-8-9 0-4 5-6-6 0-8 3zM9 10h7q0-4-3-4-4 0-4 4z" fill="#0b78d8"/></svg></button>
            <button><svg viewBox="0 0 24 24"><path d="M2 7l20-2v18L3 21z" fill="#fff"/><path d="M8 7q0-5 3.500-5.500T16 5" fill="none" stroke="#fff" stroke-width="1.500"/><path d="M6 10l5-.5V14H6zM12 9.300l6-.5V14h-6zM6 15h5v4l-5-.5zM12 15h6v5l-6-.8z" fill="#02090d"/></svg></button>
            <button><svg viewBox="0 0 24 24"><path d="M1 4h7l2 2h13v15H1z" fill="#f7cf62"/><path d="M1 8h22v13H1z" fill="#fde391"/><path d="M5 22v-8h14v8h-4v-4H9v4z" fill="#3a9ee0"/></svg></button>
            <button class="run"><svg viewBox="0 0 24 24"><path d="M23 2q-2 3-5 3 4 3 3 8-2 9-10 9T1 13Q1 3 11 2q6 1 12 0zM16 11q-1-4-5-4-4 1-4 6 1 4 5 4 3 0 3-3-2 1-4-1 2-3 5-2z" fill="#1b92e8" fill-rule="evenodd"/></svg></button>
            <button class="run"><svg viewBox="0 0 24 24"><circle cx="12" cy="12" r="10" fill="#4ec020" stroke="#e8f8d8"/><path d="M6 13h11q0-6-5-6t-5 6q1 5 6 5 3 0 4-2" fill="none" stroke="#fff" stroke-width="2.500"/><path d="M2 21Q4 5 21 1" fill="none" stroke="#2e9a10" stroke-width="1.500"/></svg></button>
            <button class="run active"><svg viewBox="0 0 24 24"><use href="#app"/></svg></button>
            <button class="run"><svg viewBox="0 0 24 24"><rect width="24" height="24" rx="2" fill="#f39a10"/><path d="M2 6l14-3 2 14-15 4z" fill="#fff" stroke="#b86a08"/><path d="M5 9l9-2M5 12l9-2M6 15l6-1" stroke="#777"/><path d="M21 2L10 16l-1 3 3-2L23 3z" fill="#8c3a14"/></svg></button>
        </div>
        <div class="cpu">17%<br>CPU使用</div>
        <div class="tray">
            <svg class="ic" viewBox="0 0 16 16"><path d="M2 11l6-6 6 6" fill="none" stroke="#fff" stroke-width="1.500"/></svg>
            <svg class="ic" viewBox="0 0 16 16"><rect width="16" height="16" fill="#3c434a"/><path d="M1 8q7-8 14 0-7 7-14 0z" fill="#76b900"/><circle cx="8" cy="8" r="2.500" fill="none" stroke="#26380a"/></svg>
            <svg class="ic" viewBox="0 0 16 16"><path d="M5.500 4.500h9v7h-9zM15 6.500v3M1.500 1v3M4.500 1v3M.500 4.500h5v1q-2.500 3-5 0M3 7v4.500h2" fill="none" stroke="#fff"/><path d="M7 6h6v4H7z" fill="#fff"/></svg>
            <svg class="ic" viewBox="0 0 16 16"><path d="M2 14Q2 4 14 3M5 14q0-7 9-8M8 14q0-4 6-5M11 14q0-2 3-2" fill="none" stroke="#ccc" stroke-width="1.500"/></svg>
            <svg class="ic" viewBox="0 0 16 16"><path d="M.5 5.500H3L7 2v12L3 10.500H.500z" fill="none" stroke="#fff"/><path d="M9 6q1 2 0 4M11 4q3 4 0 8M13 2q4 6 0 12" fill="none" stroke="#ccc"/></svg>
            <span class="lang">中</span>
            <svg class="ic"><use href="#sogou"/></svg>
        </div>
        <div class="clock">10:16<br>2017/7/24</div>
        <button class="notice"><svg width="24" height="24" viewBox="0 0 24 24"><path d="M0 1h16v13H7l-3 4v-4H0z" fill="#fff"/><path d="M3 4.500h10M3 7.500h10M3 10.500h6" stroke="#000"/><circle cx="16" cy="16" r="7.500" fill="#333" stroke="#777"/><text x="16" y="21">2</text></svg></button>
    </div>

    <script>
        // 打开对话框时选中第一个输入框的内容
        var gap = document.getElementById('hGap');
        gap.focus();
        gap.select();

        document.getElementById('gridForm').addEventListener('submit', function (e) {
            e.preventDefault();
        });
    </script>
</body>

</html>
```
FILE: styles.css
```css
* {
    box-sizing: border-box;
}

body {
    margin: 0;
    height: 100vh;
    display: flex;
    flex-direction: column;
    overflow: hidden;
    position: relative;
    background: #f0f0f0;
    color: #000;
    font: 12px/16px "Open Sans", "Noto Sans CJK SC", sans-serif;
}

button,
input,
select,
textarea {
    font: inherit;
    color: inherit;
    margin: 0;
    border-radius: 0;
}

button {
    padding: 0;
    border: none;
    background: none;
    white-space: nowrap;
}

ul {
    list-style: none;
    margin: 0;
    padding: 0;
}

kbd {
    font: 10px/12px "Liberation Mono", monospace;
}

.sprite {
    position: absolute;
}

.ic {
    width: 16px;
    height: 16px;
    flex: none;
    display: block;
}

/* 标题栏 */
.titlebar {
    display: flex;
    align-items: center;
    height: 23px;
    flex: none;
    padding: 0 17px 0 2px;
    background: #fff;
    color: #8c8c8c;
}

.caption {
    flex: 1;
    margin-left: 5px;
    font-family: Inter, "Noto Sans CJK SC", sans-serif;
    white-space: nowrap;
}

.winbtns {
    display: flex;
    gap: 30px;
}

.badge {
    position: absolute;
    top: -27px;
    left: 1083px;
    width: 46px;
    height: 46px;
    padding-top: 24px;
    border: 2px solid #c9d3cd;
    border-radius: 50%;
    background: #3fc65c;
    box-shadow: inset 0 0 0 1px #1e8a4c, 0 2px 5px #999;
    color: #fff;
    font-weight: bold;
    text-align: center;
}

/* 菜单和工具栏 */
.menubar,
.toolbar {
    display: flex;
    flex: none;
    height: 30px;
}

.menus {
    display: flex;
    align-items: center;
    justify-content: space-between;
    width: 937px;
    padding: 0 8px 0 7px;
}

.extra {
    display: flex;
    gap: 7px;
}

.strip {
    display: flex;
    align-items: center;
    gap: 7px;
    margin-top: 1px;
    padding: 0 4px;
    border-radius: 3px;
    background: linear-gradient(#fcfcfc, #eee);
}

.tip {
    width: 188px;
    justify-content: center;
    margin-right: 1px;
}

.tip a {
    color: #0a6b6b;
    text-decoration: none;
}

.account {
    flex: 1;
    gap: 8px;
}

.tb {
    display: flex;
    align-items: center;
    gap: 4px;
}

.off {
    color: #838383;
}

.arrow {
    margin-left: -2px;
    border: 3px solid transparent;
    border-top-color: #000;
    border-bottom: 0;
}

.wide {
    margin-left: 2px;
}

.off .arrow {
    border-top-color: #666;
}

.sep {
    width: 1px;
    height: 16px;
    flex: none;
    background: #b4b4b4;
}

.more {
    align-self: flex-start;
    margin-left: auto;
    font-size: 14px;
    font-weight: bold;
}

.files {
    width: 152px;
}

.files .more,
.draws .more {
    line-height: 14px;
}

.draws {
    width: 548px;
    margin-left: 1px;
}

.views {
    flex: 1;
    gap: 6px;
}

.combo {
    display: flex;
    align-items: center;
    height: 23px;
    flex: none;
}

.combo select {
    appearance: none;
    border: none;
    background: none;
    outline: none;
    padding: 0 0 0 3px;
    width: 100%;
}

.combo::after {
    content: "";
    flex: none;
    margin-right: 3px;
    border: 3px solid transparent;
    border-top-color: #333;
    border-bottom: 0;
}

.boxed {
    width: 62px;
    padding-left: 2px;
    border: 1px solid #777;
}

.white {
    width: 62px;
    background: #fff;
}

/* 主体 */
.main {
    display: flex;
    flex: 1;
    min-height: 0;
    gap: 6px;
}

.sidebar {
    display: flex;
    flex-direction: column;
    width: 198px;
    padding: 1px 0;
}

.side-title {
    display: flex;
    align-items: center;
    height: 15px;
    margin-bottom: 2px;
    border: 1px solid #8a8a8a;
    border-left: none;
}

.side-title .ic:first-of-type {
    margin-left: auto;
}

.side-btn {
    height: 22px;
    flex: none;
    border: 1px solid #a0a0a0;
    border-top-color: #fff;
    background: #f0f0f0;
}

.side-tools {
    height: 27px;
    flex: none;
    padding: 7px 0 0 6px;
    border: 1px solid #a0a0a0;
    border-bottom: none;
    background: linear-gradient(#fdfdfd, #eee);
}

.tree-box {
    display: flex;
    flex: 1;
    min-height: 0;
    margin: 0 0 1px 2px;
    padding: 1px 2px 1px 1px;
    border: 1px solid #828790;
    background: #fff;
}

.tree {
    flex: 1;
    overflow: hidden;
}

.row {
    display: flex;
    align-items: center;
    height: 16px;
    padding-left: 6px;
}

.row b {
    width: 10px;
    height: 6px;
    margin-right: 6px;
}

.row b::before {
    content: "";
    display: block;
    width: 6px;
    height: 6px;
    border: solid #a0a0a0;
    border-width: 2px 2px 0 0;
    transform: rotate(45deg);
}

.row b.open::before {
    margin: -2px 0 0 2px;
    border-color: #444;
    border-width: 0 2px 2px 0;
}

.row span {
    margin-left: 4px;
}

.kids {
    margin-left: 11px;
    padding-left: 18px;
    border-left: 1px dotted #888;
}

.kids li {
    display: flex;
    align-items: center;
    height: 16px;
    border-left: 1px dotted #888;
}

.kids li::before {
    content: "";
    width: 9px;
    margin-right: 2px;
    border-top: 1px dotted #888;
}

.kids span {
    padding: 0 4px 0 3px;
    white-space: nowrap;
}

.kids .cur span {
    background: #d9d9d9;
}

.vscroll {
    display: flex;
    flex-direction: column;
    width: 15px;
    flex: none;
    background: #f0f0f0;
}

.vscroll b {
    display: flex;
    align-items: center;
    justify-content: center;
    height: 16px;
}

.vscroll b::before {
    content: "";
    width: 6px;
    height: 6px;
    margin-top: 3px;
    border: solid #606060;
    border-width: 2px 0 0 2px;
    transform: rotate(45deg);
}

.vscroll .dn::before {
    margin: 0 0 3px;
    transform: rotate(225deg);
}

.vscroll .dn {
    margin-top: auto;
}

.thumb {
    height: 310px;
    background: #cdcdcd;
}

.long {
    height: 397px;
}

.work {
    display: flex;
    flex-direction: column;
    flex: 1;
    min-width: 0;
}

.comp-tools {
    height: 28px;
    flex: none;
}

.comp-tools .arrow {
    margin-right: 2px;
}

.comp-tools .sep {
    margin-right: -4px;
}

.comp-tools .combo {
    margin-left: -2px;
}

.comp-tools .find {
    margin-left: 3px;
}

.panels {
    display: flex;
    flex: 1;
    min-height: 0;
    gap: 3px;
}

.comps {
    display: flex;
    flex-direction: column;
    width: 185px;
    padding: 5px 0 1px;
    border-right: 2px solid #a0a0a0;
}

.search {
    display: flex;
    gap: 4px;
    height: 24px;
    flex: none;
    margin-left: 1px;
    background: #fff;
}

.search input {
    width: 157px;
    padding: 0 2px;
    border: 1px solid #7a7a7a;
    outline: none;
}

.search input::placeholder {
    color: #7d7d7d;
}

.comp-list {
    flex: 1;
    margin-top: 1px;
    padding-top: 1px;
    border: 1px solid #828790;
    background: #fff;
}

.comp-list .kids {
    margin-left: 13px;
    border-left-color: transparent;
}

.comp-list .kids li::before {
    margin-right: 0;
}

.comp-list .sel span {
    background: #2a62c0;
    color: #fff;
}

.comp-list .sel .ic {
    background: #2a62c0;
}

.props {
    display: flex;
    flex-direction: column;
    flex: 1;
    min-width: 0;
    padding: 1px 3px 1px 0;
}

.tabs {
    display: flex;
}

.tabs .tab {
    height: 20px;
    padding: 0 7px 0 5px;
    border: 1px solid #d0d0d0;
    border-bottom: none;
    background: #fff;
}

.props-body {
    display: flex;
    justify-content: space-between;
    align-items: flex-start;
    flex: 1;
    padding: 4px 2px 2px;
    border: 1px solid #d9d9d9;
    background: #fff;
}

.props-body .vscroll {
    align-self: stretch;
}

.props table {
    width: 260px;
    border-collapse: collapse;
    border: 1px solid #a0a0a0;
}

.props th {
    height: 23px;
    border: 1px solid #c0c0c0;
    background: linear-gradient(#fff, #eee);
}

.props td {
    height: 19px;
    padding: 0 0 0 19px;
    border: 1px solid #c0c0c0;
    line-height: 16px;
}

.props td:first-child {
    width: 22px;
    padding: 0;
    background: #f0f0f0;
    text-align: center;
}

.blue {
    color: #00f;
}

.gray {
    color: #888;
}

/* 截面编辑窗口 */
.editor {
    position: absolute;
    left: 462px;
    right: 22px;
    top: 132px;
    bottom: 65px;
    display: flex;
    flex-direction: column;
    padding: 0 8px 8px;
    border: 1px solid #4a4a4a;
    background: linear-gradient(#bccbd9, #d7e4f2 30px);
}

.editor h2 {
    height: 30px;
    flex: none;
    margin: 0;
    padding-top: 11px;
    color: #8d949c;
    font-size: 12px;
    font-weight: normal;
}

.ed-tabs {
    display: flex;
    align-items: flex-end;
    height: 21px;
    flex: none;
    background: #f0f0f0;
}

.ed-tabs button {
    width: 44px;
    height: 19px;
    padding-right: 12px;
    border: 1px solid #d9d9d9;
    border-bottom: none;
}

.ed-tabs .on {
    width: 51px;
    height: 21px;
    background: #fff;
}

.ed-page {
    display: flex;
    flex-direction: column;
    flex: 1;
    min-height: 0;
    padding: 2px;
    border: 1px solid #d9d9d9;
    background: #fff;
}

.ed-tools {
    height: 27px;
    flex: none;
    gap: 6px;
    margin: 0;
}

.grip {
    width: 2px;
    height: 16px;
    border-left: 2px dotted #aaa;
}

.ed-opts {
    height: 28px;
    flex: none;
    gap: 2px;
    margin: 1px 0 0;
    font-family: "Noto Sans", "Noto Sans CJK SC", sans-serif;
}

.radios {
    display: flex;
    gap: 9px;
    padding: 2px 11px 2px 2px;
    background: #f0f0f0;
}

.radios label {
    display: flex;
    align-items: center;
    gap: 9px;
}

.radios input {
    appearance: none;
    width: 11px;
    height: 11px;
    border: 1px solid #888;
    border-radius: 50%;
    background: #fff;
}

.radios input:checked {
    border-color: #333;
    background: radial-gradient(#000 3px, #fff 3px);
}

.axis {
    padding-right: 3px;
}

.spin {
    display: flex;
    align-items: center;
    width: 78px;
    height: 23px;
    margin: 0 4px;
    border: 1px solid #7a7a7a;
    background: #fafafa;
    color: #777;
}

.spin input {
    width: 60px;
    padding: 0 1px;
    border: none;
    outline: none;
    background: none;
    text-align: right;
}

.spin span {
    display: flex;
    flex-direction: column;
    gap: 8px;
    padding-left: 6px;
}

.spin i {
    border: 3px solid transparent;
    border-bottom-color: #555;
    border-top: 0;
}

.spin i + i {
    transform: rotate(180deg);
}

.unit {
    margin-right: 10px;
}

.canvas {
    display: flex;
    justify-content: center;
    flex: 1;
    min-height: 0;
    background: #000;
}

.canvas svg {
    flex: none;
}

.canvas text {
    text-anchor: middle;
    font-family: "Liberation Serif", serif;
}

.dim text {
    fill: #0f0;
    font-size: 17px;
    font-weight: bold;
}

.dim2 text {
    fill: #b8b8b8;
    font-size: 12px;
}

.ed-foot {
    height: 27px;
    flex: none;
    padding: 2px;
    background: #f0f0f0;
}

.ed-foot button {
    width: 58px;
    height: 23px;
    border: 1px solid #0078d7;
    background: #e1eefa;
}

.ed-status {
    display: flex;
    flex: none;
    gap: 2px;
    padding: 3px 0 0;
    background: #f0f0f0;
}

.ed-status span {
    width: 148px;
    height: 20px;
    line-height: 18px;
    border: 1px solid #d9d9d9;
    background: linear-gradient(#fdfdfd, #eee);
    white-space: nowrap;
}

.ed-status .grow {
    display: flex;
    align-items: flex-end;
    justify-content: space-between;
    flex: 1;
}

/* 对话框 */
.dialog {
    position: absolute;
    left: 239px;
    top: 246px;
    width: 411px;
    height: 223px;
    border: 1px solid #3f92e4;
    background: #f0f0f0;
    box-shadow: 0 4px 14px rgba(0, 0, 0, 0.35);
}

.dlg-title {
    display: flex;
    align-items: center;
    justify-content: space-between;
    height: 25px;
    padding: 0 7px 0 3px;
    background: #fff;
}

.dialog fieldset {
    margin: 15px 13px 8px;
    padding: 0 9px 6px 7px;
    border: 1px solid #dcdcdc;
    height: 65px;
}

.dialog fieldset + fieldset {
    margin-top: 8px;
}

.dialog legend {
    padding: 0 2px 0 0;
    white-space: nowrap;
}

.dialog textarea {
    display: block;
    width: 100%;
    height: 41px;
    margin-top: 1px;
    padding: 3px 1px;
    border: 1px solid #7a7a7a;
    outline: none;
    resize: none;
    background: #fff;
    font: 10px/12px "Liberation Mono", monospace;
}

.dialog textarea::selection {
    background: #0078d7;
    color: #fff;
}

.dlg-btns {
    display: flex;
    justify-content: flex-end;
    gap: 15px;
    padding: 4px 14px;
}

.dlg-btns button {
    width: 72px;
    height: 23px;
    border: 1px solid #adadad;
    background: #e1e1e1;
}

/* 状态栏 */
.statusbar {
    display: flex;
    gap: 2px;
    height: 22px;
    flex: none;
    padding-top: 2px;
    background: #fafafa;
}

.statusbar span {
    height: 19px;
    padding-left: 1px;
    border: 1px solid #d9d9d9;
    background: linear-gradient(#fdfdfd, #eee);
    line-height: 18px;
}

.c1 {
    width: 148px;
}

.c2 {
    width: 78px;
}

.c3 {
    width: 98px;
}

.c4 {
    width: 49px;
}

.c5 {
    width: 71px;
}

.statusbar .grow {
    flex: 1;
}

.ime {
    position: absolute;
    left: 607px;
    top: 693px;
    display: flex;
    align-items: center;
    gap: 6px;
    width: 180px;
    height: 24px;
    border: 1px solid #b4c6d8;
    background: #fbfdff;
    color: #1c72c8;
    font-size: 14px;
    font-weight: bold;
}

.ime .logo {
    width: 28px;
    height: 28px;
    flex: none;
    margin-left: -6px;
}

/* 任务栏 */
.taskbar {
    display: flex;
    align-items: center;
    height: 40px;
    flex: none;
    background: #010b10;
    color: #fff;
}

.start {
    display: flex;
    justify-content: center;
    width: 48px;
}

.cortana {
    display: flex;
    align-items: center;
    gap: 4px;
    width: 344px;
    height: 40px;
    padding: 0 13px 0 8px;
    background: #2f3538;
}

.cortana input {
    flex: 1;
    border: none;
    outline: none;
    background: none;
    font-size: 14px;
}

.cortana input::placeholder {
    color: #a4a7a8;
}

.apps {
    display: flex;
    flex: 1;
    gap: 2px;
    margin-left: 2px;
}

.apps button {
    display: flex;
    align-items: center;
    justify-content: center;
    width: 48px;
    height: 40px;
}

.apps svg {
    width: 24px;
    height: 24px;
}

.apps .pale {
    color: #ddd;
}

.apps .run {
    background: linear-gradient(#76b9ed, #76b9ed) center bottom / 40px 2px no-repeat;
}

.apps .active {
    background-color: #353d41;
    background-size: 48px 2px;
}

.cpu,
.clock {
    width: 60px;
    font-size: 12px;
    line-height: 18px;
    text-align: center;
}

.cpu {
    margin-right: 8px;
}

.tray {
    display: flex;
    align-items: center;
    gap: 8px;
}

.lang {
    font-size: 14px;
}

.clock {
    margin-left: 16px;
}

.notice {
    display: flex;
    align-items: center;
    height: 40px;
    margin: 0 4px 0 18px;
    padding-right: 13px;
    border-right: 1px solid #666;
}

.notice text {
    fill: #fff;
    font-size: 13px;
    font-weight: bold;
    text-anchor: middle;
}
```
